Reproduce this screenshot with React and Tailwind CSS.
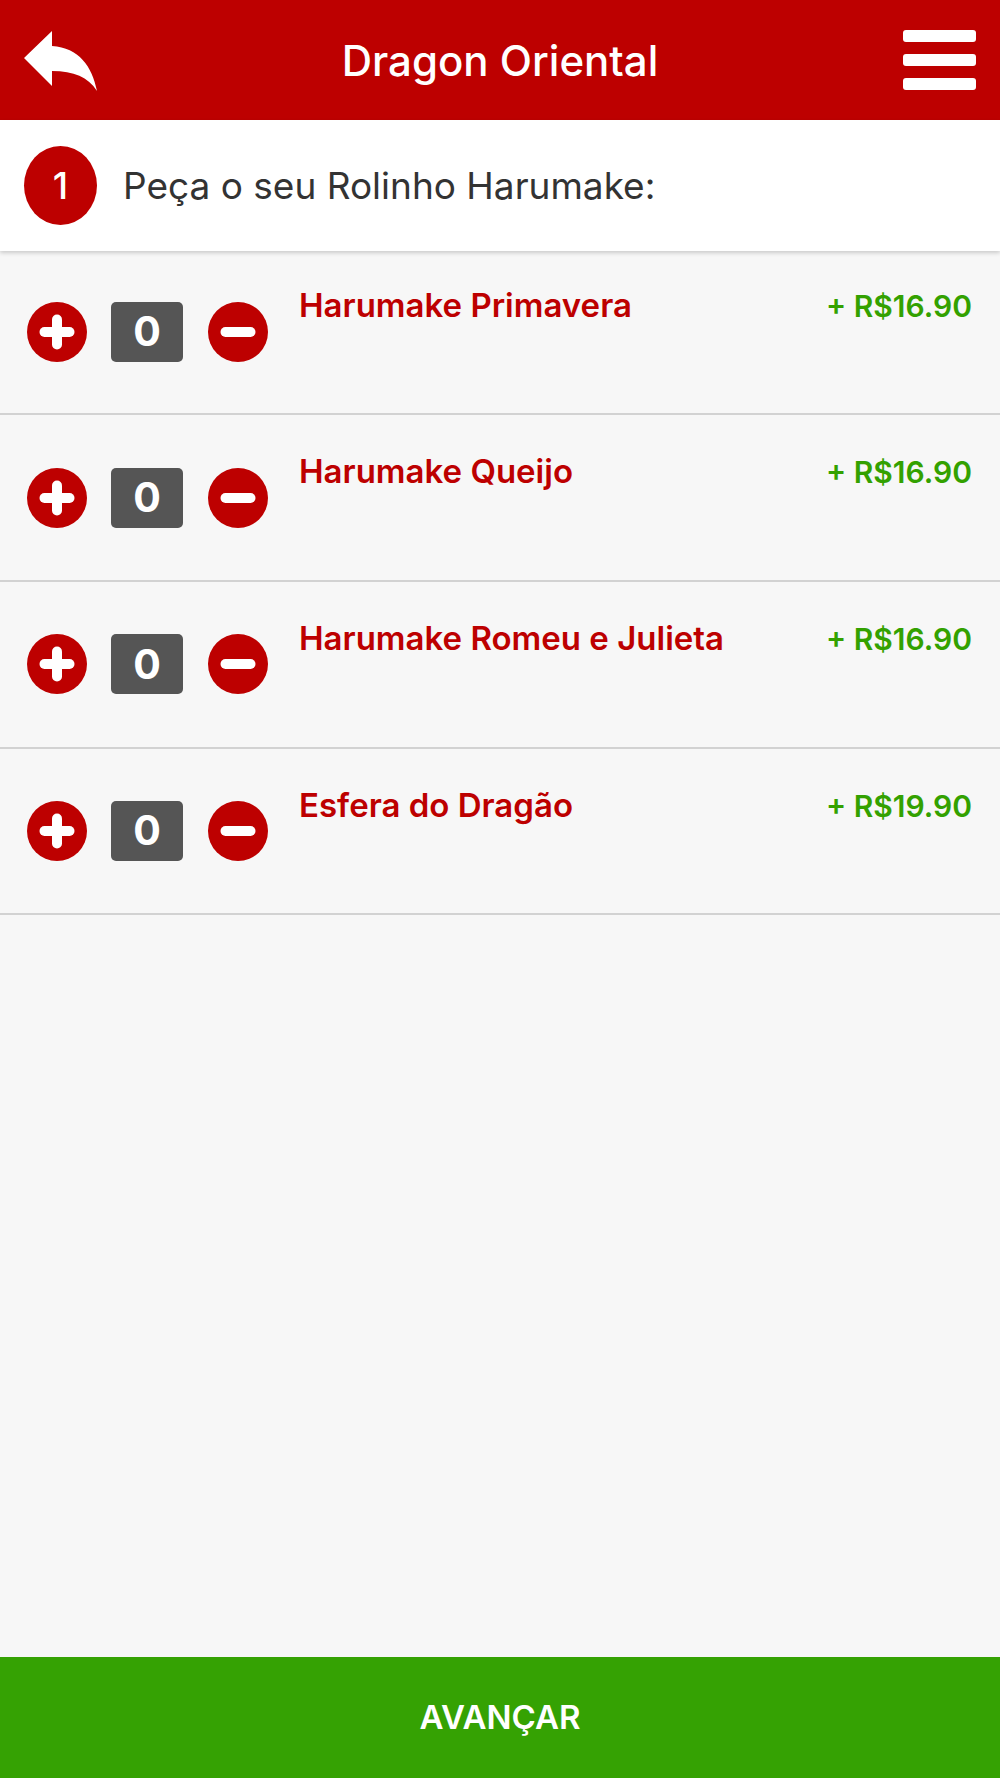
import React from "react";

const items = [
  { name: "Harumake Primavera", price: "16.90" },
  { name: "Harumake Queijo", price: "16.90" },
  { name: "Harumake Romeu e Julieta", price: "16.90" },
  { name: "Esfera do Dragão", price: "19.90" },
];

function RoundButton({ minus }) {
  return (
    <svg width="60" height="60" viewBox="0 0 60 60">
      <circle cx="30" cy="30" r="30" fill="#bd0000" />
      <line x1="17.5" y1="30" x2="42.5" y2="30" stroke="#fff" strokeWidth="10" strokeLinecap="round" />
      {!minus && (
        <line x1="30" y1="17.5" x2="30" y2="42.5" stroke="#fff" strokeWidth="10" strokeLinecap="round" />
      )}
    </svg>
  );
}

function ItemRow({ item, first }) {
  return (
    <div
      className={
        "flex border-b-2 border-[#d2d2d2] pl-[27px] pr-[28px] " +
        (first ? "h-[164.33px]" : "h-[166.67px]")
      }
    >
      <div className="flex items-center self-center">
        <RoundButton />
        <div className="ml-[24px] flex h-[60px] w-[72px] items-center justify-center rounded-[5px] bg-[#555555] text-[41px] font-bold text-white">
          0
        </div>
        <div className="ml-[25px]">
          <RoundButton minus />
        </div>
      </div>
      <div
        className={
          "ml-[31px] flex flex-1 items-baseline justify-between font-semibold leading-[40px] " +
          (first ? "pt-[34px]" : "pt-[36px]")
        }
      >
        <span className="text-[33px] text-[#bd0000]">{item.name}</span>
        <span className="text-[30px] text-[#33a100]">+ R${item.price}</span>
      </div>
    </div>
  );
}

export default function App() {
  return (
    <div className="flex min-h-screen flex-col bg-[#f7f7f7] font-['Inter',sans-serif]">
      <header className="flex h-[120px] items-center justify-between bg-[#bd0000] px-[24px]">
        <svg width="73" height="60" viewBox="0 0 73 60" className="mt-[2px]">
          <path d="M0 27 L28 0 L28 15 C55 17 68 35 73 60 C64 46 50 40 28 40 L28 55 Z" fill="#fff" />
        </svg>
        <h1 className="text-[42px] font-medium text-white">Dragon Oriental</h1>
        <div className="flex w-[73px] flex-col gap-[12px]">
          <span className="h-[12px] rounded-[3px] bg-white" />
          <span className="h-[12px] rounded-[3px] bg-white" />
          <span className="h-[12px] rounded-[3px] bg-white" />
        </div>
      </header>

      <div className="relative z-10 flex h-[131px] items-center bg-white pl-[24px] shadow-[0_2px_4px_rgba(0,0,0,0.18)]">
        <div className="flex h-[79px] w-[73px] items-center justify-center rounded-[50%] bg-[#bd0000] text-[37px] font-medium text-white">
          1
        </div>
        <span className="ml-[26px] text-[37px] text-[#333333]">Peça o seu Rolinho Harumake:</span>
      </div>

      <div className="flex-1">
        {items.map((item, i) => (
          <ItemRow key={item.name} item={item} first={i === 0} />
        ))}
      </div>

      <button className="flex h-[121px] items-center justify-center bg-[#35a203] text-[33px] font-semibold text-white">
        AVANÇAR
      </button>
    </div>
  );
}
